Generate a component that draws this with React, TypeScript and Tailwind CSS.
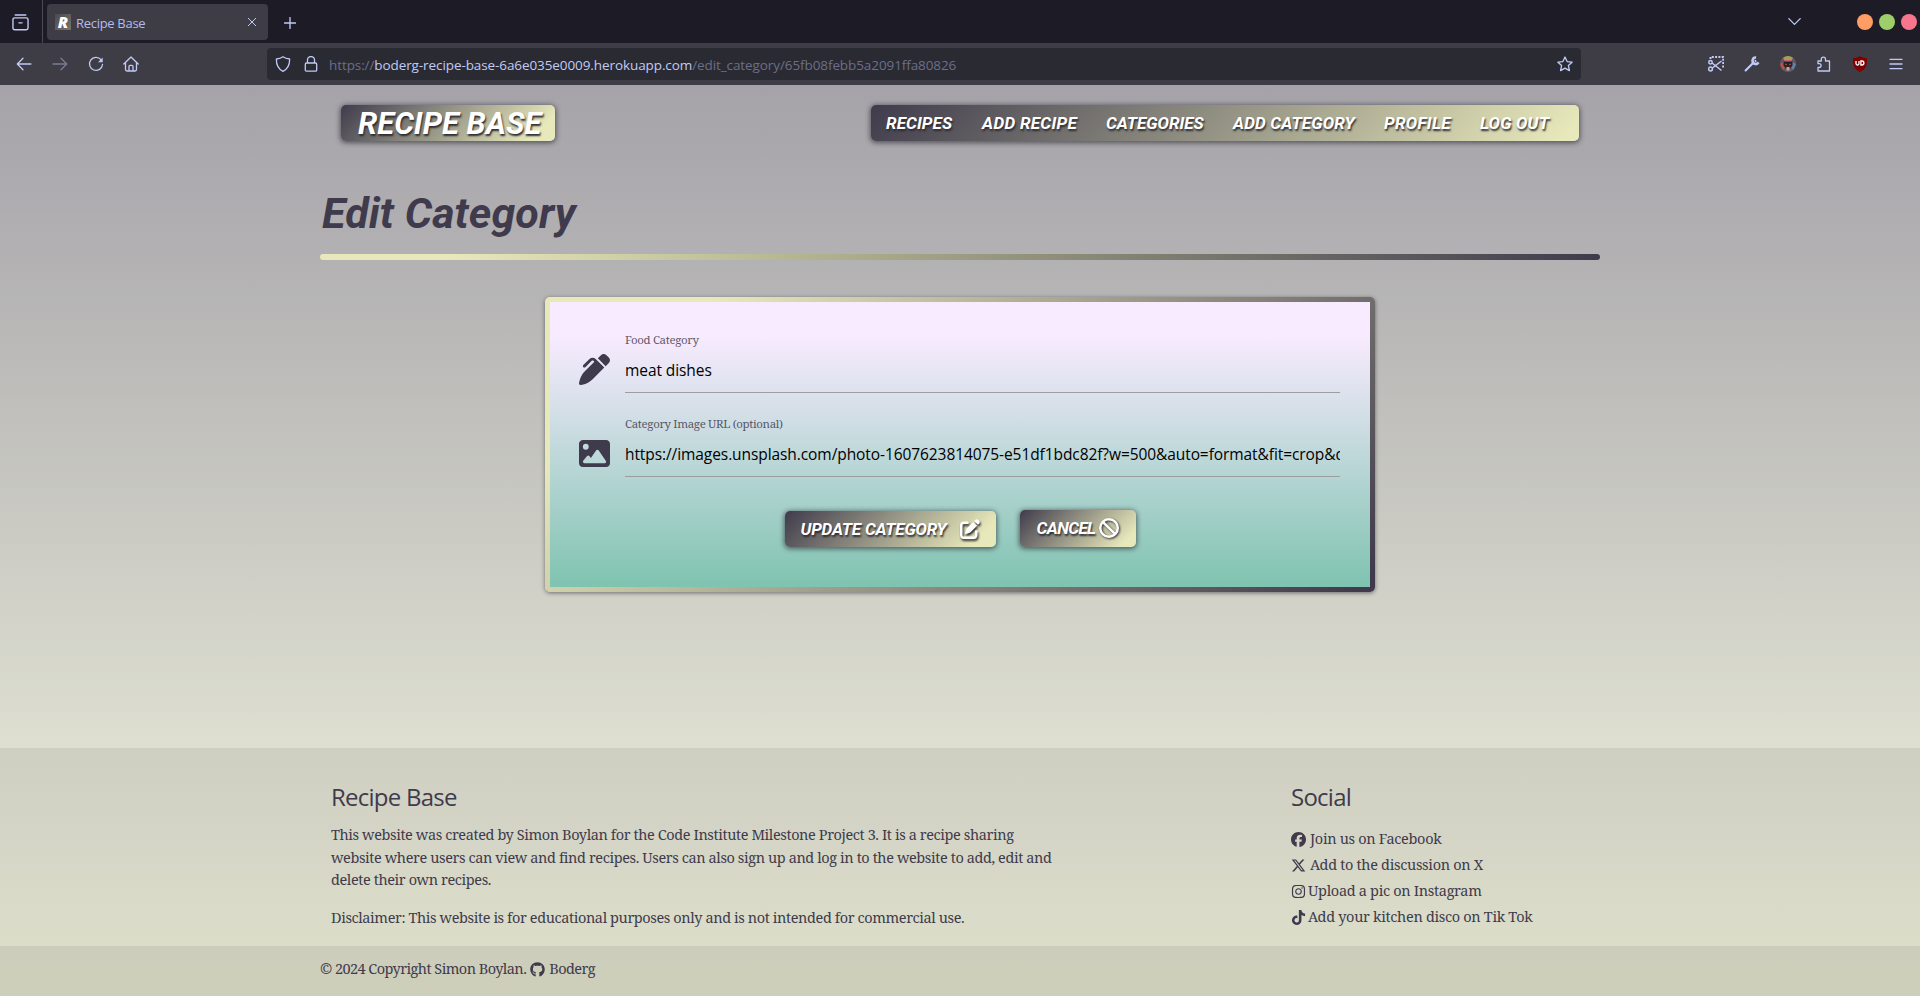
import React from "react";
import { FaPenClip, FaImage, FaPenToSquare, FaBan, FaFacebook, FaXTwitter, FaInstagram, FaTiktok, FaGithub } from "react-icons/fa6";

const ui = "font-['Open_Sans','Noto_Sans',sans-serif]";
const title = "font-['Roboto','Noto_Sans',sans-serif]";
const body = "font-['Noto_Serif','DejaVu_Serif_Condensed',serif]";
const chip =
  "rounded-[5px] shadow-[0_1px_5px_1px_rgba(30,28,40,0.6)] text-white font-bold italic [text-shadow:1px_2px_2px_#2d2a30]";
const chipFill = "bg-[linear-gradient(135deg,#3f3b4c,#e8e9bb_90%)]";

const nav = [
  { label: "RECIPES", cls: "w-24 tracking-[0.1px]" },
  { label: "ADD RECIPE", cls: "w-[124px] tracking-[0.3px]" },
  { label: "CATEGORIES", cls: "w-[127px]" },
  { label: "ADD CATEGORY", cls: "w-[151px] tracking-[0.15px]" },
  { label: "PROFILE", cls: "w-24 tracking-[0.3px]" },
  { label: "LOG OUT", cls: "w-[114px] tracking-[0.2px]" },
];

const social = [
  { Icon: FaFacebook, label: "Join us on Facebook", gap: "gap-1" },
  { Icon: FaXTwitter, label: "Add to the discussion on X", gap: "gap-1" },
  { Icon: FaInstagram, label: "Upload a pic on Instagram", gap: "gap-0.5" },
  { Icon: FaTiktok, label: "Add your kitchen disco on Tik Tok", gap: "gap-0.5" },
];

function Line({ d, size = 16, className = "" }: { d: string; size?: number; className?: string }) {
  return (
    <svg width={size} height={size} viewBox="0 0 16 16" fill="none" stroke="currentColor" strokeWidth="1.3" strokeLinecap="round" strokeLinejoin="round" className={`shrink-0 ${className}`}>
      <path d={d} />
    </svg>
  );
}

function TabBar() {
  return (
    <div className="flex h-[43px] bg-[#1c1b26] text-[#c0caf5]">
      <div className="flex w-[43px] items-center justify-center border-r border-[#4a4956] pr-0.5 pt-0.5">
        <Line size={17} d="M3 .9h10M2.5 3.7h11q1.6 0 1.6 1.6v7.8q0 1.7-1.7 1.7H2.6Q.9 14.8.9 13.1V5.3q0-1.6 1.6-1.6zM6.5 8.300h3" />
      </div>
      <div className={`mt-1 ml-1 flex h-9 w-[221px] items-center rounded-[4px] bg-[#3e3d46] pr-[11px] pl-2 ${ui}`}>
        <span className="flex size-4 items-center justify-center bg-[linear-gradient(135deg,#4c4852,#77736b)] text-[16px] leading-4 font-extrabold text-white italic">R</span>
        <span className="mt-px ml-[5px] grow text-[13px] leading-5 tracking-[-0.3px] text-[#b3bbee]">Recipe Base</span>
        <Line size={10} d="M2 2l12 12M14 2L2 14" className="[stroke-width:1.6]" />
      </div>
      <div className="flex items-center pt-0.5 pl-4">
        <Line size={12} d="M8 .7v14.6M.7 8h14.6" className="[stroke-width:1.8]" />
      </div>
      <div className="grow" />
      <div className="mr-10 flex items-center pr-4">
        <Line size={13} d="M1 4.5l7 7 7-7" className="[stroke-width:1.6]" />
      </div>
      <div className="flex items-center gap-1.5 pr-[3px]">
        <span className="size-4 rounded-full bg-[#ff9e64]" />
        <span className="size-4 rounded-full bg-[#9ece6a]" />
        <span className="size-4 rounded-full bg-[#f7768e]" />
      </div>
    </div>
  );
}

function ToolBar() {
  return (
    <div className="flex h-[42px] items-center bg-[#3e3d46] text-[#c0caf5]">
      <div className="flex w-[267px] items-center gap-5 pl-4">
        <Line d="M1.3 8h13.6M7 2.3L1.3 8 7 13.7" />
        <Line d="M1 8h13.7M9 2.3L14.7 8 9 13.7" className="opacity-45" />
        <svg width="16" height="16" viewBox="0 0 16 16" fill="none" stroke="currentColor" strokeWidth="1.3" strokeLinecap="round">
          <path d="M13 3.700A6.500 6.500 0 1 0 14.500 8.500" />
          <path d="M14.700 1.500v4.700H10z" fill="currentColor" stroke="none" />
        </svg>
        <Line d="M.8 8L8 1l7.2 7M2.5 6.6v7q0 1.4 1.4 1.4h8.2q1.400 0 1.400-1.400v-7M6 15v-4.600q0-1 1-1h2q1 0 1 1V15" className="-ml-px" />
      </div>
      <div className="mr-auto flex h-8 w-[1314px] items-center rounded-[4px] bg-[#2a2a33] pr-2 pl-2">
        <Line d="M8 .8c2 1.5 4.3 2 6.6 2.2C14.8 8.500 13 13 8 15.300 3 13 1.200 8.500 1.400 3 3.700 2.800 6 2.300 8 .8z" />
        <Line d="M3.5 7h9q1.200 0 1.200 1.200v5.700q0 1.200-1.200 1.200h-9q-1.200 0-1.200-1.200V8.200Q2.300 7 3.500 7zM4.500 7V4a3.500 3.500 0 0 1 7 0v3" className="ml-3" />
        <span className={`mt-0.5 ml-2.5 grow text-[13.5px] leading-5 tracking-[-0.09px] text-[#6c6e88] ${ui}`}>
          https://<span className="text-[#c0caf5]">boderg-recipe-base-6a6e035e0009.herokuapp.com</span>/edit_category/65fb08febb5a2091ffa80826
        </span>
        <Line d="M8 1l2.100 4.600 5 .6-3.700 3.400 1 5L8 12.100l-4.400 2.500 1-5L.9 6.200l5-.6z" />
      </div>
      <div className="flex items-center gap-5 pr-4">
        <svg width="16" height="16" viewBox="0 0 16 16" fill="none" stroke="currentColor" strokeWidth="1.5">
          <path d="M2.500 3V1h12.700v10.500" strokeDasharray="2 1.300" strokeWidth="2" />
          <circle cx="2.500" cy="6.300" r="1.700" />
          <circle cx="2.500" cy="13" r="1.900" />
          <path d="M4 7l9.500 7.500M4.300 12L13.500 5" />
        </svg>
        <svg width="16" height="16" viewBox="0 0 15 15" fill="none" stroke="currentColor">
          <path d="M1.500 13.500l7-7" strokeWidth="2" strokeLinecap="round" />
          <path d="M11.300 1.500a3 3 0 1 0 2.300 4.500" strokeWidth="2.400" />
          <path d="M10 5l1.500-.5" strokeWidth="2" />
        </svg>
        <svg width="16" height="16" viewBox="0 0 16 16">
          <circle cx="8" cy="8" r="8" fill="#6b5668" />
          <path d="M3 2a8 8 0 0 1 10 0L11 5H5z" fill="#a5a04e" />
          <path d="M4 4h8l-1 2H5z" fill="#c0647c" />
          <path d="M0 8l4-2 1 5-2 3z" fill="#b5573f" />
          <path d="M16 8l-4-2-1 5 2 3z" fill="#5f86a5" />
          <path d="M3.500 5.500h9v4l-2.500 3H6l-2.500-3z" fill="#28202a" />
          <path d="M5 8l2 1M11 8l-2 1" stroke="#b5573f" />
          <path d="M6.500 11h3v3.500h-3z" fill="#c6a78a" />
        </svg>
        <Line d="M2 5h3.300V3.300a2.100 2.100 0 0 1 4.200 0V5h4v10H2v-3.500h1.200a1.900 1.900 0 0 0 0-3.800H2z" />
        <svg width="16" height="16" viewBox="0 0 16 16">
          <path d="M8 0c2 1.400 4.500 2 7 2 .3 6-.5 11-7 14C1.500 13 .7 8 1 2c2.500 0 5-.6 7-2z" fill="#800000" />
          <path d="M4 5v2.500a1.500 1.500 0 0 0 3 0V5M8.900 5v4h1a2 2 0 0 0 0-4z" fill="none" stroke="#fff" strokeWidth="1.300" />
        </svg>
        <Line d="M2 3.300h12M2 8h12M2 12.700h12" />
      </div>
    </div>
  );
}

function Field({ label, value, children }: { label: string; value: string; children: React.ReactNode }) {
  return (
    <div className="flex h-[62px] pr-[30px] pl-[29px]">
      <div className="mt-[23px] w-[46px] text-[31px] text-[#3f3b4c]">{children}</div>
      <div className="w-[715px] border-b border-[#9e9e9e]">
        <div className={`h-4 text-[11.5px] leading-[17px] tracking-[-0.35px] text-[#3f3b4c]/85 ${body}`}>{label}</div>
        <div className={`h-[45px] overflow-hidden text-[15.5px] leading-[47px] tracking-[-0.08px] whitespace-nowrap text-black ${ui}`}>{value}</div>
      </div>
    </div>
  );
}

export default function App() {
  return (
    <div className="flex h-[996px] w-[1920px] flex-col overflow-hidden">
      <TabBar />
      <ToolBar />
      <div className="flex grow flex-col bg-[linear-gradient(180deg,#a5a2a9,#b9b8b7_27%,#dedfd1_72.5%,#edeed9_94%,#eff0da)] text-[#3f3b4c]">
        <div className="h-[663px]">
          <header className={`flex justify-between pt-5 pr-[341px] pl-[341px] ${title}`}>
            <div className={`h-9 w-[214px] pl-[17px] text-[31px] leading-[38px] whitespace-nowrap ${chip} ${chipFill}`}>RECIPE BASE</div>
            <nav className={`flex h-9 w-[708px] bg-[linear-gradient(135deg,#3f3b4c,#e8e9bb_98%)] text-[17px] leading-9 ${chip}`}>
              {nav.map((n) => (
                <a key={n.label} className={`pl-[15px] whitespace-nowrap ${n.cls}`}>{n.label}</a>
              ))}
            </nav>
          </header>
          <main className="mx-auto w-[1280px]">
            <h1 className={`mt-[47px] h-12 pl-0.5 text-[43px] leading-[50px] font-bold tracking-[0.1px] italic ${title}`}>Edit Category</h1>
            <div className="mt-[18px] h-1.5 rounded-[3px] bg-[linear-gradient(90deg,#e8e9bb_10%,#b4b690_37%,#3f3b4c)]" />
            <div className="mx-auto mt-[37px] h-[295px] w-[830px] rounded-[5px] bg-[linear-gradient(135deg,#e8e9bb_15%,#3f3b4c_98%)] p-[5px] shadow-[0_1px_4px_rgba(40,40,50,0.6)]">
              <form className="h-[285px] bg-[linear-gradient(180deg,#f8ebff_12%,#7fc3b0)] pt-[29px]">
                <Field label="Food Category" value="meat dishes"><FaPenClip /></Field>
                <div className="h-[22px]" />
                <Field label="Category Image URL (optional)" value="https://images.unsplash.com/photo-1607623814075-e51df1bdc82f?w=500&auto=format&fit=crop&q=60"><FaImage /></Field>
                <div className={`mt-[33px] flex items-end justify-center gap-6 text-[17px] ${title}`}>
                  <button type="button" className={`flex h-9 w-[211px] items-center pl-4 tracking-[-0.2px] whitespace-nowrap ${chip} ${chipFill}`}>
                    <span className="mt-0.5 w-[159px] text-left">UPDATE CATEGORY</span>
                    <FaPenToSquare className="size-5 [filter:drop-shadow(1px_2px_1px_#2d2a30)]" />
                  </button>
                  <button type="button" className={`flex h-[37px] w-[116px] items-center pl-[17px] tracking-[-0.6px] whitespace-nowrap ${chip} ${chipFill}`}>
                    <span className="mt-px w-[62px] text-left">CANCEL</span>
                    <FaBan className="-mt-0.5 size-5 [filter:drop-shadow(1px_1px_1px_#2d2a30)]" />
                  </button>
                </div>
              </form>
            </div>
          </main>
        </div>
        <footer className={`flex grow flex-col bg-black/7 text-[14.5px] tracking-[-0.4px] ${body}`}>
          <div className="flex h-[198px] pt-8 pl-[331px]">
            <div className="w-[960px]">
              <h5 className={`h-8 text-[24px] leading-[34px] tracking-[-0.75px] ${ui}`}>Recipe Base</h5>
              <p className="mt-[11px] leading-[22.5px] whitespace-nowrap">
                This website was created by Simon Boylan for the Code Institute Milestone Project 3. It is a recipe sharing
                <br />
                website where users can view and find recipes. Users can also sign up and log in to the website to add, edit and
                <br />
                delete their own recipes.
              </p>
              <p className="mt-[15px] leading-[22.5px]">Disclaimer: This website is for educational purposes only and is not intended for commercial use.</p>
            </div>
            <div>
              <h5 className={`h-8 text-[24px] leading-[34px] tracking-[-0.75px] ${ui}`}>Social</h5>
              <ul className="mt-3.5 tracking-[-0.32px]">
                {social.map(({ Icon, label, gap }) => (
                  <li key={label} className={`flex h-[26px] items-center whitespace-nowrap ${gap}`}>
                    <Icon className="size-[15px]" />
                    {label}
                  </li>
                ))}
              </ul>
            </div>
          </div>
          <div className="flex grow items-center gap-1 bg-black/7 pb-1 pl-80 tracking-[-0.55px]">
            © 2024 Copyright Simon Boylan. <FaGithub className="size-[15px]" /> Boderg
          </div>
        </footer>
      </div>
    </div>
  );
}
